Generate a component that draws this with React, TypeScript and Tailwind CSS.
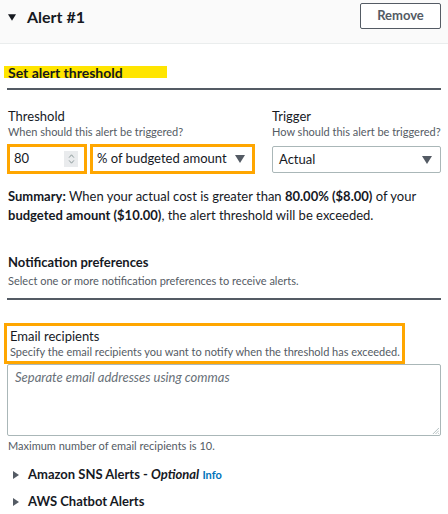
import React from 'react';

function Caret({ className = '' }: { className?: string }) {
  return (
    <svg viewBox="0 0 10 8" className={className} fill="currentColor">
      <path d="M0 0h10L5 8z" />
    </svg>
  );
}

function Expander({ children }: { children: React.ReactNode }) {
  return (
    <div className="flex items-center gap-[9px] pl-[6px] h-[16px] text-[13px] font-bold text-[#16191f]">
      <svg viewBox="0 0 6 8" className="w-[6px] h-[8px] text-[#545b64]" fill="currentColor">
        <path d="M0 0v8l6-4z" />
      </svg>
      {children}
    </div>
  );
}

export default function App() {
  return (
    <div className="w-[448px] h-[514px] overflow-hidden bg-white text-[#16191f]" style={{ fontFamily: 'Lato, "Noto Sans", Arial, sans-serif' }}>
      {/* header */}
      <div className="h-[44px] bg-[#fafafa] border-b border-[#eaeded] flex items-start justify-between pl-[8px] pr-[7px] pt-[3px]">
        <div className="flex items-center gap-[11px] h-[26px] mt-[1px]">
          <Caret className="w-[8px] h-[7px] text-[#16191f]" />
          <span className="text-[16px] font-bold leading-none">Alert #1</span>
        </div>
        <button className="w-[81px] h-[26px] border border-[#545b64] rounded-[2px] bg-white text-[13px] font-bold text-[#545b64]">Remove</button>
      </div>

      <div className="px-[7px]">
        {/* section title */}
        <div className="pt-[22px] flex">
          <div className="bg-[#ffe500] -ml-[3px] w-[163px] pl-[4px] h-[12px] flex items-center text-[14px] font-bold">Set alert threshold</div>
        </div>
        <div className="mt-[10px] h-[2px] bg-[#545b64]" />

        {/* threshold row */}
        <div className="mt-[18px] flex gap-[17px]">
          <div className="flex flex-col">
            <div className="text-[13px] leading-[16px] pl-[1px]">Threshold</div>
            <div className="text-[11px] leading-[16px] text-[#545b64] pl-[1px]">When should this alert be triggered?</div>
            <div className="mt-[4px] flex gap-[3px]">
              <div className="w-[80px] h-[30px] border-[3px] border-[#ffa600] flex items-center justify-between pl-[4px] pr-[6px] text-[13px]">
                <span>80</span>
                <span className="w-[14px] h-[16px] bg-[#e9ebed] flex flex-col items-center justify-center gap-[2px] text-[#879596]">
                  <svg viewBox="0 0 8 5" className="w-[7px] h-[4px]" fill="none" stroke="currentColor" strokeWidth="1.2"><path d="M1 4.5L4 1l3 3.5" /></svg>
                  <svg viewBox="0 0 8 5" className="w-[7px] h-[4px]" fill="none" stroke="currentColor" strokeWidth="1.2"><path d="M1 .5L4 4l3-3.5" /></svg>
                </span>
              </div>
              <div className="w-[165px] h-[30px] border-[3px] border-[#ffa600] flex items-center justify-between pl-[4px] pr-[7px] text-[13px] whitespace-nowrap">
                <span>% of budgeted amount</span>
                <Caret className="w-[10px] h-[8px] text-[#545b64]" />
              </div>
            </div>
          </div>
          <div className="flex flex-col flex-1">
            <div className="text-[13px] leading-[16px]">Trigger</div>
            <div className="text-[11px] leading-[16px] text-[#545b64] whitespace-nowrap">How should this alert be triggered?</div>
            <div className="mt-[6px] h-[27px] border border-[#aab7b8] rounded-[2px] flex items-center justify-between pl-[6px] pr-[8px] text-[13px]">
              <span>Actual</span>
              <Caret className="w-[10px] h-[8px] text-[#545b64]" />
            </div>
          </div>
        </div>

        {/* summary */}
        <p className="mt-[13px] text-[13px] leading-[19px] text-[#16191f] pl-[1px] pr-[20px]">
          <b>Summary:</b> When your actual cost is greater than <b>80.00% ($8.00)</b> of your <b>budgeted amount ($10.00)</b>, the alert threshold will be exceeded.
        </p>

        {/* notification prefs */}
        <div className="mt-[28px] text-[13px] font-bold leading-[18px] pl-[1px]">Notification preferences</div>
        <div className="mt-[2px] text-[11px] leading-[16px] text-[#545b64] pl-[1px]">Select one or more notification preferences to receive alerts.</div>
        <div className="mt-[9px] h-[2px] bg-[#545b64]" />

        {/* email */}
        <div className="mt-[23px] -ml-[3px] w-[401px] h-[41px] border-[3px] border-[#ffa600] pl-[3px] pt-[2px] flex flex-col whitespace-nowrap">
          <div className="text-[13px] leading-[16px]">Email recipients</div>
          <div className="text-[11px] leading-[16px] text-[#545b64]">Specify the email recipients you want to notify when the threshold has exceeded.</div>
        </div>
        <div className="relative h-[72px] border border-[#aab7b8] rounded-[2px] px-[7px] pt-[4px]">
          <div className="text-[13px] leading-[16px] italic text-[#687078]">Separate email addresses using commas</div>
          <svg viewBox="0 0 8 8" className="absolute right-[1px] bottom-[1px] w-[7px] h-[7px] text-[#aab7b8]" fill="none" stroke="currentColor" strokeWidth="1">
            <path d="M1 8L8 1M4 8L8 4M7 8L8 7" />
          </svg>
        </div>
        <div className="mt-[2px] text-[11px] leading-[16px] text-[#545b64] pl-[1px]">Maximum number of email recipients is 10.</div>

        <div className="mt-[13px] flex flex-col gap-[11px]">
          <Expander>
            <span>Amazon SNS Alerts - <i>Optional</i> <span className="text-[11px] text-[#0073bb]">Info</span></span>
          </Expander>
          <Expander>AWS Chatbot Alerts</Expander>
        </div>
      </div>
    </div>
  );
}
